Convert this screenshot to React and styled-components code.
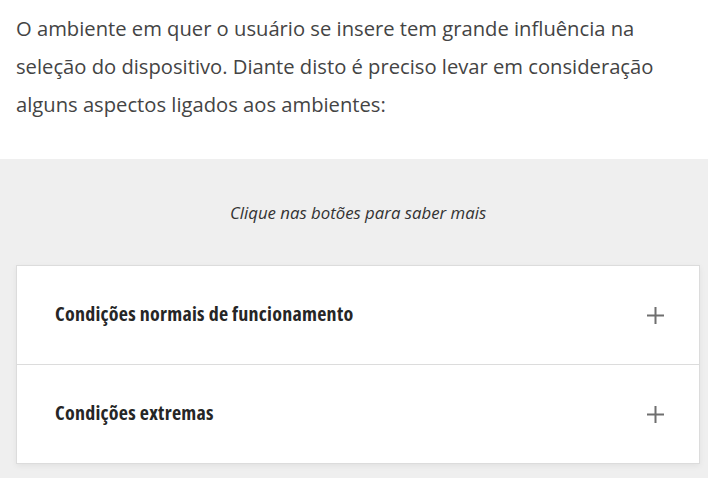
import React from "react";
import styled, { createGlobalStyle } from "styled-components";

const Global = createGlobalStyle`
  html, body { margin: 0; padding: 0; background: #fff; }
  body { font-family: "Open Sans", "Liberation Sans", sans-serif; }
`;

const Page = styled.div`
  width: 708px;
  height: 478px;
  overflow: hidden;
  display: flex;
  flex-direction: column;
`;

const Intro = styled.p`
  margin: 0;
  padding: 9px 30px 0 16px;
  height: 150px;
  font-size: 20.2px;
  line-height: 38px;
  color: #444;
`;

const Section = styled.section`
  flex: 1;
  background: #efefef;
  display: flex;
  flex-direction: column;
  align-items: center;
  padding: 0 8px 0 16px;
`;

const Hint = styled.p`
  margin: 43px 0 0 0;
  font-size: 16.8px;
  line-height: 22px;
  font-style: italic;
  color: #333;
`;

const Card = styled.div`
  align-self: stretch;
  margin-top: 41px;
  background: #fff;
  border: 1px solid #dcdcdc;
  box-shadow: 0 2px 6px rgba(0, 0, 0, 0.06);
`;

const Row = styled.div`
  height: 98px;
  display: flex;
  align-items: center;
  justify-content: space-between;
  padding: 0 35px 0 38px;
  border-top: ${(p) => (p.$first ? "none" : "1px solid #dcdcdc")};
`;

const Title = styled.span`
  font-size: 20px;
  line-height: 26px;
  margin-top: -2px;
  letter-spacing: 0.25px;
  font-weight: 700;
  color: #262626;
  font-stretch: 75%;
`;

const Plus = () => (
  <svg width="17" height="17" viewBox="0 0 17 17">
    <path d="M8.5 0v17M0 8.5h17" stroke="#6f6f6f" strokeWidth="2" fill="none" />
  </svg>
);

export default function App() {
  return (
    <Page>
      <Global />
      <Intro>
        O ambiente em quer o usuário se insere tem grande influência na seleção do
        dispositivo. Diante disto é preciso levar em consideração alguns aspectos ligados
        aos ambientes:
      </Intro>
      <Section>
        <Hint>Clique nas botões para saber mais</Hint>
        <Card>
          <Row $first>
            <Title>Condições normais de funcionamento</Title>
            <Plus />
          </Row>
          <Row>
            <Title>Condições extremas</Title>
            <Plus />
          </Row>
        </Card>
      </Section>
    </Page>
  );
}
